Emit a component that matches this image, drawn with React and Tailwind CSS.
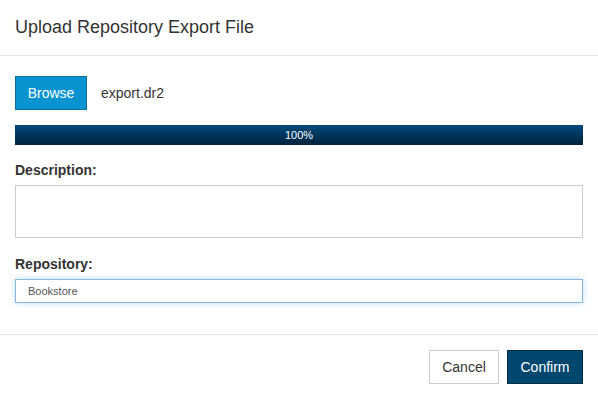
import React from 'react';

const App = () => {
  return (
    <div className="w-[598px] h-[399px] bg-white text-[#333] font-['Liberation_Sans',Arial,sans-serif] flex flex-col">
      {/* Header */}
      <div className="h-[56px] border-b border-[#e5e5e5] px-[15px] flex items-center">
        <h2 className="text-[18px] leading-[20px] text-[#333] pb-[2px]">Upload Repository Export File</h2>
      </div>

      {/* Body */}
      <div className="flex-1 px-[15px] pt-[20px]">
        <div className="flex items-center h-[34px]">
          <button className="w-[72px] h-[34px] bg-[#0a93d1] border border-[#0a6d9c] text-white text-[14px] leading-none">
            Browse
          </button>
          <span className="ml-[14px] text-[14px]">export.dr2</span>
        </div>

        <div className="mt-[15px] h-[20px] bg-gradient-to-b from-[#004a7c] to-[#00233d] flex items-center justify-center text-white text-[11px]">
          100%
        </div>

        <label className="block mt-[15px] text-[14px] leading-[20px] font-bold">Description:</label>
        <textarea className="block mt-[5px] w-full h-[53px] border border-[#cccccc] resize-none outline-none" />

        <label className="block mt-[16px] text-[14px] leading-[20px] font-bold">Repository:</label>
        <input
          className="block mt-[5px] w-full h-[24px] border border-[#88b6e0] shadow-[0_0_6px_rgba(102,175,233,0.45)] pl-[12px] text-[11px] text-[#555] outline-none"
          defaultValue="Bookstore"
        />
      </div>

      {/* Footer */}
      <div className="border-t border-[#e5e5e5] px-[15px] pt-[15px] pb-[15px] flex justify-end gap-[8px]">
        <button className="w-[70px] h-[34px] bg-white border border-[#cccccc] text-[14px] text-[#333]">
          Cancel
        </button>
        <button className="w-[76px] h-[34px] bg-[#00476f] border border-[#002b45] text-[14px] text-white">
          Confirm
        </button>
      </div>
    </div>
  );
};

export default App;
